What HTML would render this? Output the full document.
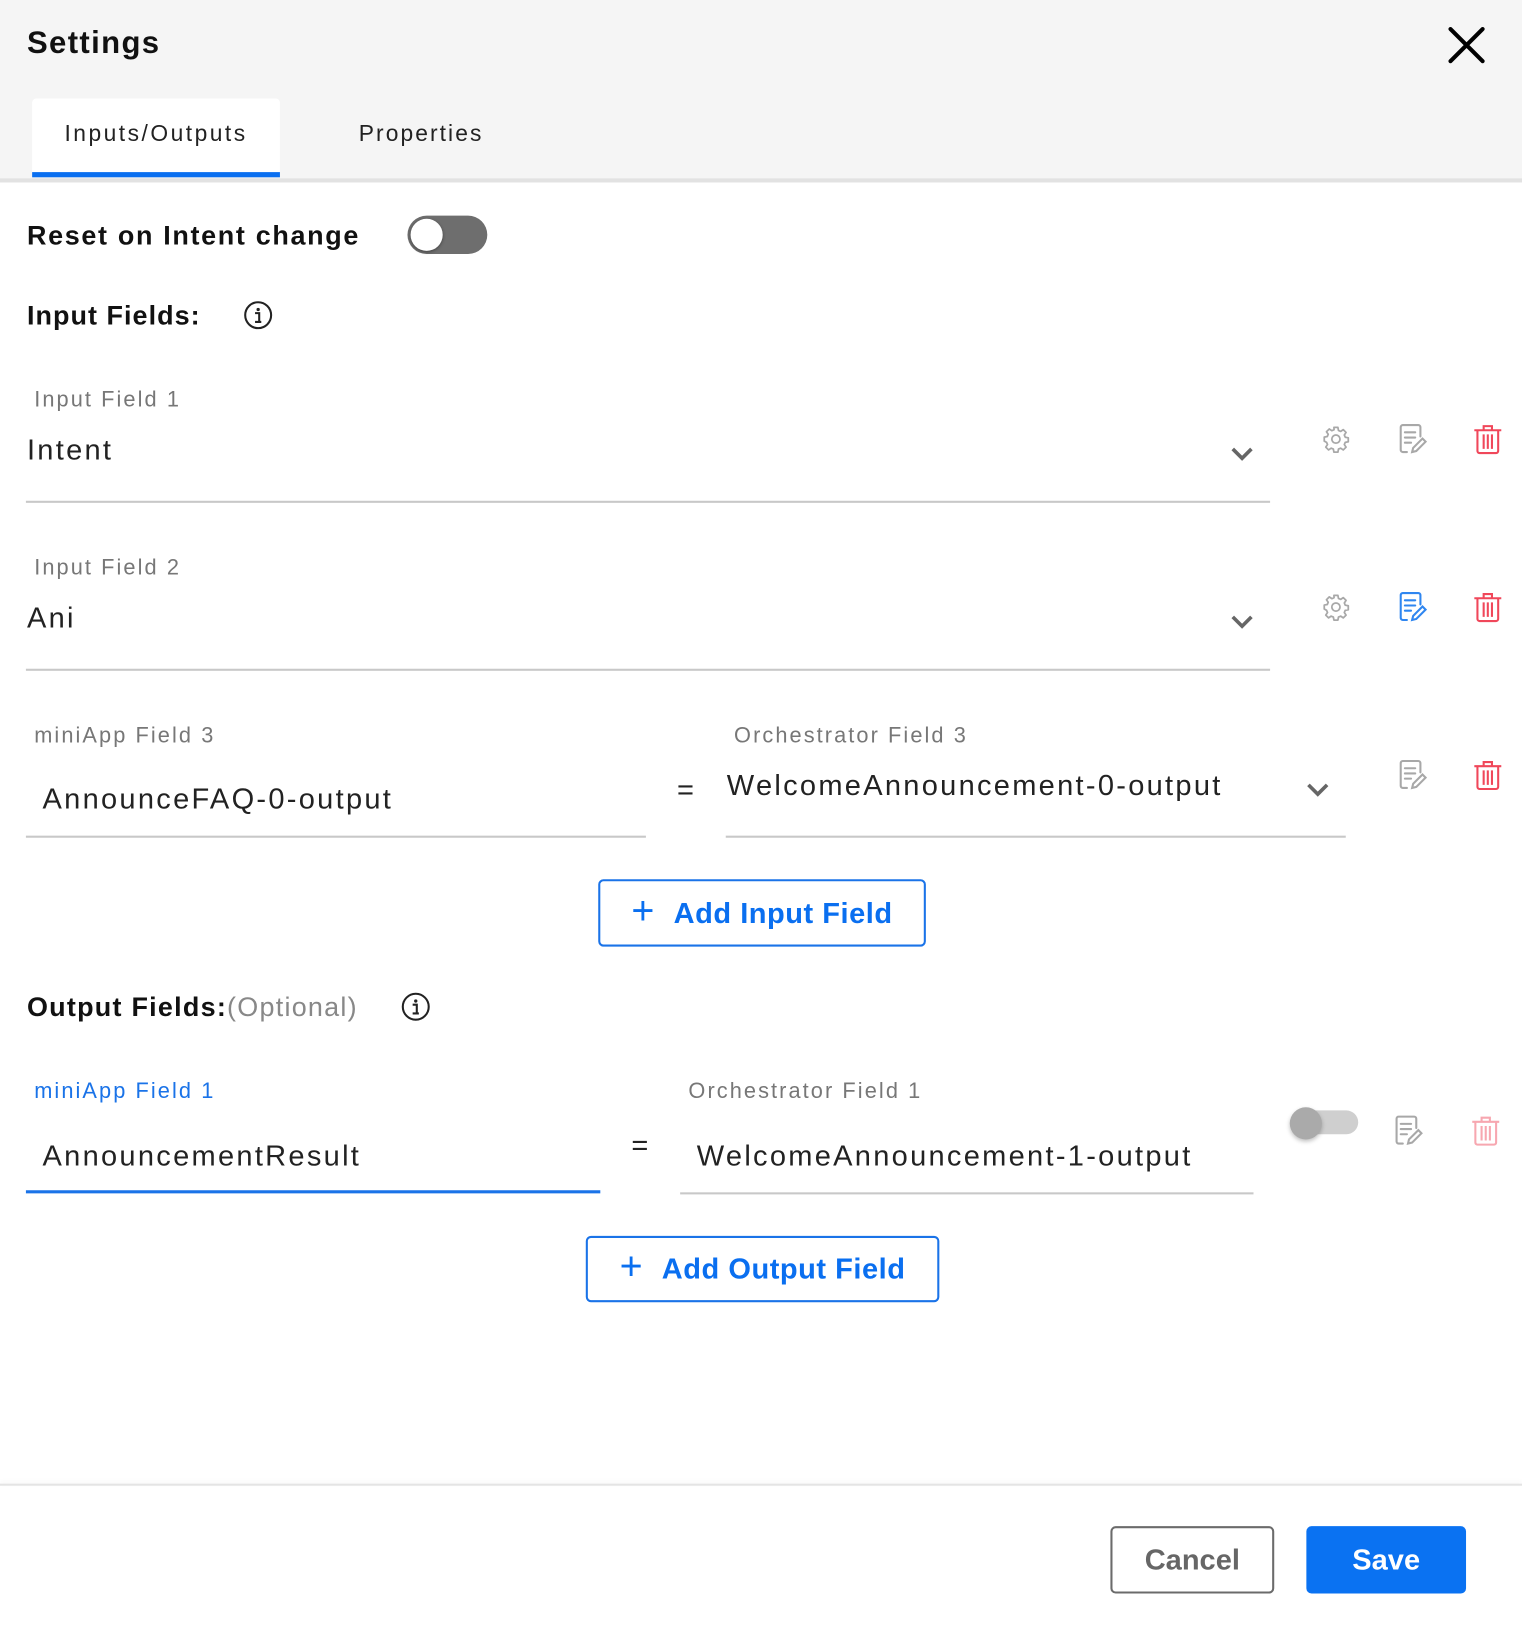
<!DOCTYPE html>
<html><head><meta charset="utf-8"><style>
html,body{margin:0;padding:0;background:#fff;overflow:hidden}
body{width:1522px;height:1626px;font-family:"Liberation Sans",sans-serif}
#w{position:absolute;left:0;top:0;width:1468px;height:1569px;transform:scale(1.0368);transform-origin:0 0}
.a{position:absolute;white-space:nowrap;line-height:40px;height:40px}
.lbl{font-size:21px;color:#777;letter-spacing:2px}
.val{font-size:28px;color:#222;letter-spacing:2.2px}
.ul{position:absolute;height:2px;background:#c8c8c8}
svg{position:absolute;overflow:visible}
.btn{position:absolute;border:2px solid #1a73e8;border-radius:5px;box-sizing:border-box;color:#0a6ff0;font-size:28px;font-weight:bold;display:flex;align-items:center;justify-content:center;gap:18px;letter-spacing:.5px}
</style></head><body><div id="w">
<div style="position:absolute;left:0;top:0;width:1468px;height:172px;background:#f5f5f5"></div>
<div style="position:absolute;left:0;top:172px;width:1468px;height:4px;background:#e2e2e2"></div>
<div class="a" style="left:26px;top:22px;font-size:30px;font-weight:bold;color:#111;letter-spacing:1.3px">Settings</div>
<svg style="left:1397px;top:26px" width="35" height="35" viewBox="0 0 35 35"><path d="M2 2L33 33M33 2L2 33" stroke="#000" stroke-width="4" stroke-linecap="round"/></svg>
<div style="position:absolute;left:31px;top:95px;width:239px;height:76px;background:#fff;border-radius:4px 4px 0 0"></div>
<div style="position:absolute;left:31px;top:166px;width:239px;height:5px;background:#0a6ff0"></div>
<div class="a" style="left:31px;width:239px;text-align:center;top:109px;font-size:22px;color:#222;letter-spacing:2.4px">Inputs/Outputs</div>
<div class="a" style="left:346px;top:109px;font-size:22px;color:#222;letter-spacing:2px">Properties</div>

<div class="a" style="left:26px;top:207px;font-size:26px;font-weight:bold;color:#111;letter-spacing:1.6px">Reset on Intent change</div>
<div style="position:absolute;left:393px;top:208px;width:77px;height:37px;border-radius:19px;background:#6e6e6e"></div>
<div style="position:absolute;left:396px;top:211px;width:31px;height:31px;border-radius:50%;background:#fff;box-shadow:0 1px 3px rgba(0,0,0,.4)"></div>

<div class="a" style="left:26px;top:284px;font-size:26px;font-weight:bold;color:#111;letter-spacing:1px">Input Fields:</div>
<svg style="left:235px;top:290px" width="28" height="28" viewBox="0 0 28 28"><circle cx="14" cy="14" r="12.5" fill="none" stroke="#222" stroke-width="2"/><circle cx="14" cy="8.5" r="1.6" fill="#222"/><path d="M11 12h4v8M11 20.5h6" stroke="#222" stroke-width="2" fill="none"/></svg>

<div class="a lbl" style="left:33px;top:366px">Input Field 1</div>
<div class="a val" style="left:26px;top:414px">Intent</div>
<svg style="left:1187px;top:431px" width="22" height="13" viewBox="0 0 22 13"><path d="M2 2l9 9 9-9" stroke="#666" stroke-width="3.5" fill="none"/></svg>
<div class="ul" style="left:25px;top:483px;width:1200px"></div>

<div class="a lbl" style="left:33px;top:528px">Input Field 2</div>
<div class="a val" style="left:26px;top:576px">Ani</div>
<svg style="left:1187px;top:593px" width="22" height="13" viewBox="0 0 22 13"><path d="M2 2l9 9 9-9" stroke="#666" stroke-width="3.5" fill="none"/></svg>
<div class="ul" style="left:25px;top:645px;width:1200px"></div>

<div class="a lbl" style="left:33px;top:690px">miniApp Field 3</div>
<div class="a val" style="left:41px;top:751px">AnnounceFAQ-0-output</div>
<div class="ul" style="left:25px;top:806px;width:598px"></div>
<div class="a val" style="left:653px;top:742px">=</div>
<div class="a lbl" style="left:708px;top:690px">Orchestrator Field 3</div>
<div class="a val" style="left:701px;top:738px">WelcomeAnnouncement-0-output</div>
<svg style="left:1260px;top:755px" width="22" height="13" viewBox="0 0 22 13"><path d="M2 2l9 9 9-9" stroke="#666" stroke-width="3.5" fill="none"/></svg>
<div class="ul" style="left:700px;top:806px;width:598px"></div>

<div class="btn" style="left:577px;top:848px;width:316px;height:65px"><span style="font-size:38px;font-weight:normal;line-height:1;margin-top:-4px">+</span>Add Input Field</div>

<div class="a" style="left:26px;top:951px;font-size:26px;color:#111;letter-spacing:1.2px"><b>Output Fields:</b><span style="color:#888">(Optional)</span></div>
<svg style="left:387px;top:957px" width="28" height="28" viewBox="0 0 28 28"><circle cx="14" cy="14" r="12.5" fill="none" stroke="#222" stroke-width="2"/><circle cx="14" cy="8.5" r="1.6" fill="#222"/><path d="M11 12h4v8M11 20.5h6" stroke="#222" stroke-width="2" fill="none"/></svg>

<div class="a lbl" style="left:33px;top:1033px;color:#1a73e8">miniApp Field 1</div>
<div class="a val" style="left:41px;top:1095px">AnnouncementResult</div>
<div style="position:absolute;left:25px;top:1148px;width:554px;height:3px;background:#1a73e8"></div>
<div class="a val" style="left:609px;top:1085px">=</div>
<div class="a lbl" style="left:664px;top:1033px">Orchestrator Field 1</div>
<div class="a val" style="left:672px;top:1095px">WelcomeAnnouncement-1-output</div>
<div class="ul" style="left:656px;top:1150px;width:553px"></div>
<div style="position:absolute;left:1248px;top:1071px;width:62px;height:23px;border-radius:12px;background:#cfcfcf"></div>
<div style="position:absolute;left:1244px;top:1068px;width:31px;height:31px;border-radius:50%;background:#aaa;box-shadow:0 2px 4px rgba(0,0,0,.25)"></div>

<div class="btn" style="left:565px;top:1192px;width:341px;height:64px"><span style="font-size:38px;font-weight:normal;line-height:1;margin-top:-4px">+</span>Add Output Field</div>

<svg style="left:1275px;top:410px" width="27" height="27" viewBox="0 0 24 24"><g fill="none" stroke="#a8a8a8" stroke-width="1.5"><circle cx="12" cy="12" r="3.5"/><path d="M10.3 2h3.4l.5 2.6 1.9.8 2.2-1.5 2.4 2.4-1.5 2.2.8 1.9 2.6.5v3.4l-2.6.5-.8 1.9 1.5 2.2-2.4 2.4-2.2-1.5-1.9.8-.5 2.6h-3.4l-.5-2.6-1.9-.8-2.2 1.5-2.4-2.4 1.5-2.2-.8-1.9L2 13.7v-3.4l2.6-.5.8-1.9-1.5-2.2 2.4-2.4 2.2 1.5 1.9-.8z" stroke-linejoin="round"/></g></svg>
<svg style="left:1275px;top:572px" width="27" height="27" viewBox="0 0 24 24"><g fill="none" stroke="#a8a8a8" stroke-width="1.5"><circle cx="12" cy="12" r="3.5"/><path d="M10.3 2h3.4l.5 2.6 1.9.8 2.2-1.5 2.4 2.4-1.5 2.2.8 1.9 2.6.5v3.4l-2.6.5-.8 1.9 1.5 2.2-2.4 2.4-2.2-1.5-1.9.8-.5 2.6h-3.4l-.5-2.6-1.9-.8-2.2 1.5-2.4-2.4 1.5-2.2-.8-1.9L2 13.7v-3.4l2.6-.5.8-1.9-1.5-2.2 2.4-2.4 2.2 1.5 1.9-.8z" stroke-linejoin="round"/></g></svg>

<svg style="left:1349px;top:409px" width="27" height="29" viewBox="0 0 27 29"><g fill="none" stroke="#a8a8a8" stroke-width="2" stroke-linecap="round"><path d="M8 27H4a2 2 0 0 1-2-2V3a2 2 0 0 1 2-2h15a2 2 0 0 1 2 2v9"/><path d="M6 8h10M6 13h10M6 18h6"/><path d="M13 27l1-4 9-9 3 3-9 9z"/></g></svg>
<svg style="left:1349px;top:571px" width="27" height="29" viewBox="0 0 27 29"><g fill="none" stroke="#2f86f0" stroke-width="2" stroke-linecap="round"><path d="M8 27H4a2 2 0 0 1-2-2V3a2 2 0 0 1 2-2h15a2 2 0 0 1 2 2v9"/><path d="M6 8h10M6 13h10M6 18h6"/><path d="M13 27l1-4 9-9 3 3-9 9z"/></g></svg>
<svg style="left:1349px;top:733px" width="27" height="29" viewBox="0 0 27 29"><g fill="none" stroke="#a8a8a8" stroke-width="2" stroke-linecap="round"><path d="M8 27H4a2 2 0 0 1-2-2V3a2 2 0 0 1 2-2h15a2 2 0 0 1 2 2v9"/><path d="M6 8h10M6 13h10M6 18h6"/><path d="M13 27l1-4 9-9 3 3-9 9z"/></g></svg>
<svg style="left:1345px;top:1076px" width="27" height="29" viewBox="0 0 27 29"><g fill="none" stroke="#a8a8a8" stroke-width="2" stroke-linecap="round"><path d="M8 27H4a2 2 0 0 1-2-2V3a2 2 0 0 1 2-2h15a2 2 0 0 1 2 2v9"/><path d="M6 8h10M6 13h10M6 18h6"/><path d="M13 27l1-4 9-9 3 3-9 9z"/></g></svg>

<svg style="left:1421px;top:409px" width="28" height="29" viewBox="0 0 28 29"><g fill="none" stroke="#f0475a" stroke-width="2"><path d="M1 6h26M10 6V2h8v4"/><path d="M4 6v20a2 2 0 0 0 2 2h16a2 2 0 0 0 2-2V6"/><path d="M10 10v14M14 10v14M18 10v14"/></g></svg>
<svg style="left:1421px;top:571px" width="28" height="29" viewBox="0 0 28 29"><g fill="none" stroke="#f0475a" stroke-width="2"><path d="M1 6h26M10 6V2h8v4"/><path d="M4 6v20a2 2 0 0 0 2 2h16a2 2 0 0 0 2-2V6"/><path d="M10 10v14M14 10v14M18 10v14"/></g></svg>
<svg style="left:1421px;top:733px" width="28" height="29" viewBox="0 0 28 29"><g fill="none" stroke="#f0475a" stroke-width="2"><path d="M1 6h26M10 6V2h8v4"/><path d="M4 6v20a2 2 0 0 0 2 2h16a2 2 0 0 0 2-2V6"/><path d="M10 10v14M14 10v14M18 10v14"/></g></svg>
<svg style="left:1419px;top:1076px" width="28" height="29" viewBox="0 0 28 29"><g fill="none" stroke="#f7a7b0" stroke-width="2"><path d="M1 6h26M10 6V2h8v4"/><path d="M4 6v20a2 2 0 0 0 2 2h16a2 2 0 0 0 2-2V6"/><path d="M10 10v14M14 10v14M18 10v14"/></g></svg>

<div style="position:absolute;left:0;top:1431px;width:1468px;height:2px;background:#e4e4e4;box-shadow:0 -2px 4px rgba(0,0,0,.05)"></div>
<div style="position:absolute;left:1071px;top:1472px;width:158px;height:65px;border:2px solid #6b6b6b;border-radius:5px;box-sizing:border-box;display:flex;align-items:center;justify-content:center;font-size:28px;color:#666;font-weight:bold">Cancel</div>
<div style="position:absolute;left:1260px;top:1472px;width:154px;height:65px;background:#0a72f2;border-radius:5px;display:flex;align-items:center;justify-content:center;font-size:28px;color:#fff;font-weight:bold">Save</div>
</div></body></html>
